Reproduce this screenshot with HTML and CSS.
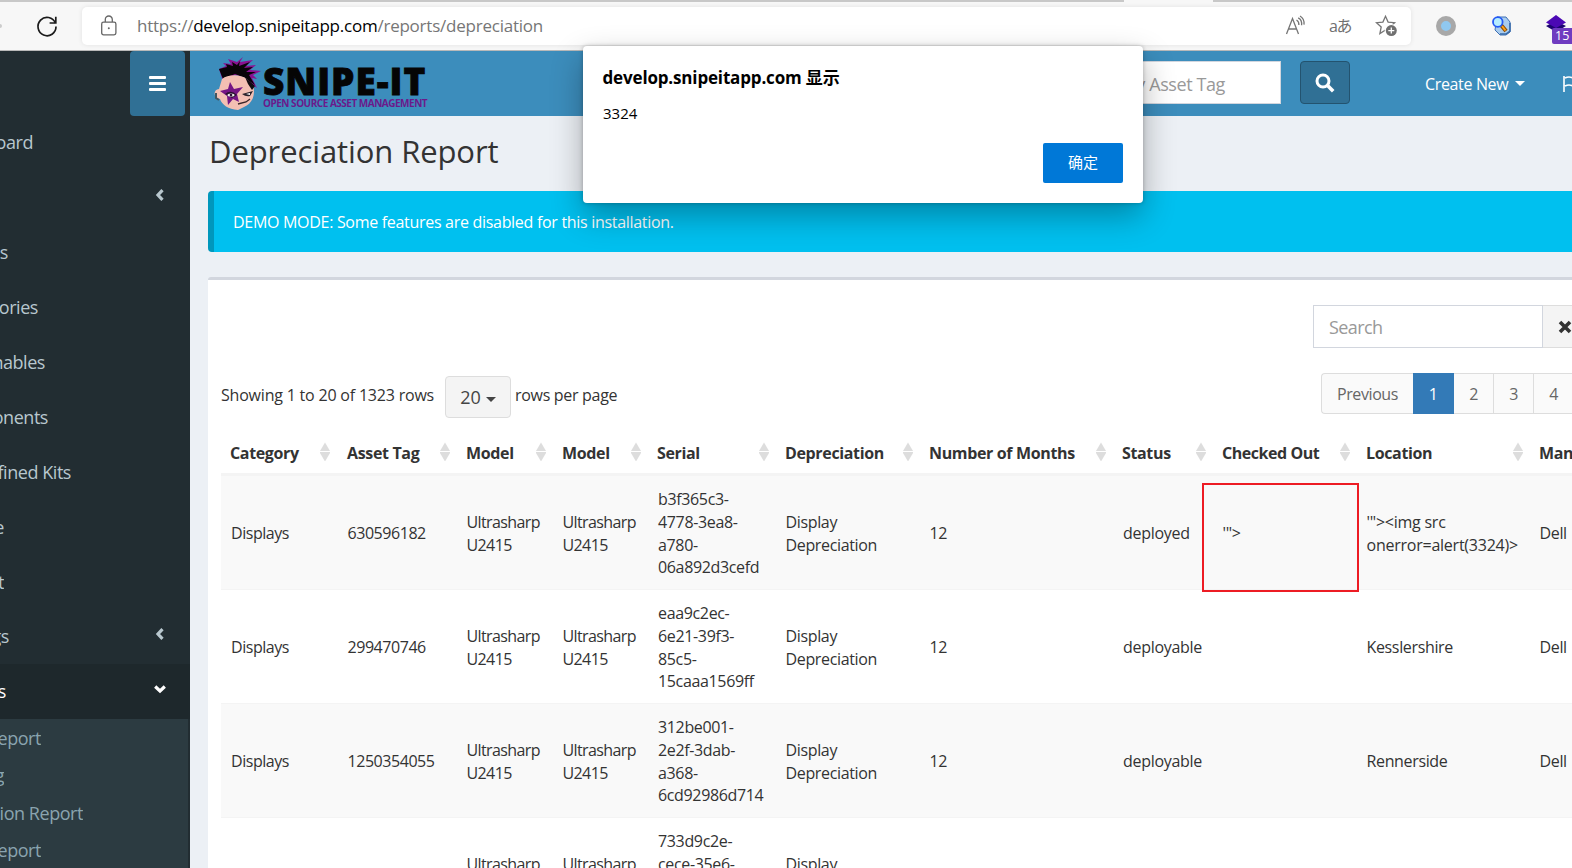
FILE: index.html
```html
<!DOCTYPE html>
<html lang="en">
<head>
<meta charset="utf-8">
<title>Depreciation Report</title>
<link rel="stylesheet" href="styles.css">
</head>
<body>
<div class="tabstrip"><span class="tab-active"></span></div>
<div class="toolbar">
  <i class="fwd"></i>
  <svg class="reload" width="24" height="24" viewBox="0 0 24 24" fill="none" stroke="#1b1b1b" stroke-width="1.7"><path d="M20.3 9A9 9.2 0 1 0 21 12.5"/><path d="M20.8 2.8V9H14.6"/></svg>
  <div class="address">
    <svg class="lock" width="18" height="22" viewBox="0 0 18 22" fill="none" stroke="#666" stroke-width="1.3"><rect x="1.7" y="7.2" width="14.2" height="12.6" rx="1.8"/><path d="M5.3 7V4.5a3.5 3.5 0 0 1 7 0V7"/><circle cx="8.8" cy="13.3" r="1" fill="#666" stroke="none"/></svg>
    <span class="url">https://<b>develop.snipeitapp.com</b>/reports/depreciation</span>
    <svg class="read" width="22" height="22" viewBox="0 0 22 22" fill="none" stroke="#757575" stroke-width="1.3"><path d="M1.5 19 7.5 3.5 13.5 19M3.6 14h7.8"/><path d="M11.5 5q2.6 1.4 2.4 5M13.2 2.8q4 2 3.4 7.4M15 1q4.6 2.600 4 8.600"/></svg>
    <span class="lang">aあ</span>
    <svg class="fav" width="24" height="24" viewBox="0 0 24 24"><path d="M10.500 2.300 13.100 8.100 19.600 8.700 14.800 13 16 19.300 10.500 16 4.900 19.600 6.200 13 1.500 8.700 7.900 8.100Z" fill="none" stroke="#757575" stroke-width="1.3"/><circle cx="16.300" cy="16.600" r="6.600" fill="#fff"/><circle cx="16.300" cy="16.600" r="5.500" fill="#707070"/><path d="M16.300 13.600v6M13.300 16.600h6" stroke="#fff" stroke-width="1.3"/></svg>
  </div>
  <i class="ring"></i>
  <svg class="finder" width="20" height="20" viewBox="0 0 20 20"><path d="M6 1h9l4 5v10l-4 3H9l-5-5z" fill="#a9ccee" stroke="#3d6fb4"/><path d="M9 18h6l4-3V7" fill="none" stroke="#3568a8" stroke-width="1.500"/><path d="m10 9 5 6" stroke="#8a4a00" stroke-width="4"/><path d="m11 10 3.500 4.500" stroke="#ffa31a" stroke-width="2"/><circle cx="6.800" cy="6" r="4.800" fill="#b5ecff" stroke="#2459f5" stroke-width="1.800"/></svg>
  <div class="stack">
    <svg width="24" height="24" viewBox="0 0 24 24"><path d="m2 12 10-5 10 5-10 6z" fill="#1d0670"/><path d="M2 8.500 12 1l10 7.500L12 14z" fill="#4b09b4"/></svg>
    <span class="count">15</span>
  </div>
</div>

<div class="page">
  <aside class="sidebar">
    <div class="toggle-row"><button class="toggle"><i></i><i></i><i></i></button></div>
    <ul class="menu">
      <li><span class="w-dash">oard</span></li>
      <li class="parent"><svg class="chev" width="10" height="14" viewBox="0 0 10 14"><path d="M7.500 2.200 3 7l4.500 4.800"/></svg></li>
      <li><span class="w-lic">es</span></li>
      <li><span class="w-acc">ories</span></li>
      <li><span class="w-con">nables</span></li>
      <li><span class="w-com">onents</span></li>
      <li><span class="w-kit">fined Kits</span></li>
      <li><span class="w-peo">e</span></li>
      <li><span class="w-imp">t</span></li>
      <li class="parent"><span class="w-set">gs</span><svg class="chev" width="10" height="14" viewBox="0 0 10 14"><path d="M7.500 2.200 3 7l4.500 4.800"/></svg></li>
      <li class="parent active"><span class="w-rep">s</span><svg class="chev down" width="14" height="10" viewBox="0 0 14 10"><path d="M2.200 2.500 7 7l4.800-4.500"/></svg></li>
    </ul>
    <ul class="submenu">
      <li><span class="w-sub">eport</span></li>
      <li><span class="w-log">g</span></li>
      <li><span class="w-dep">tion Report</span></li>
      <li><span class="w-sub">eport</span></li>
    </ul>
  </aside>

  <main class="main">
    <header class="navbar">
      <div class="logo">
        <svg width="48" height="54" viewBox="0 0 48 54">
          <path d="M6 12 13 9 10 6 18 7 15 2 24 5 30 0 27 5 40 3 33 9 43 8 37 13 48 14 40 18 44 22 39 21 44 31 36 25 32 20 22 18 10 24Z" fill="#8a1191"/>
          <path d="M6 12 14 10 13 7 20 9 19 5 24 8 27 4 26 9 37 5 31 11 40 10 33 15 43 15 36 18 42 28 32 21 22 17 10 22Z" fill="#080408"/>
          <path d="M9 22C15 17 27 17 34 22L40 28C43 38 39 47 31 50L25 53C15 52 9 48 7 42C0 41 0 32 6 32Z" fill="#f3bfb3"/>
          <path d="M32 20 42 29 39 33 35 27Z" fill="#100b10"/>
          <path d="m17 25 4 7 9-2-6 7 2 8-6-3-5 6-1-9-7-5 8-2z" fill="#751585"/>
          <path d="M12 37q6-5 12 1l-5 3z" fill="#2a1230"/><ellipse cx="18" cy="38" rx="3.500" ry="1.600" fill="#eee"/><circle cx="18" cy="38" r="1.300" fill="#301036"/>
          <path d="m29 37 11-3-3 5q-4 1-8-2" fill="#29212a"/><path d="m33 37 4-1v2z" fill="#fff"/><path d="m25 47 8-2 4-3" stroke="#3c2528" stroke-width="1.300" fill="none"/>
          <path d="M3 36v5l3 2" stroke="#44565f" stroke-width="2" fill="none"/>
        </svg>
        <div class="wordmark"><span class="name">SNIPE-IT</span><span class="tag">OPEN SOURCE ASSET MANAGEMENT</span></div>
      </div>
      <div class="lookup"><span>y Asset Tag</span></div>
      <button class="go"><svg width="20" height="20" viewBox="0 0 20 20" fill="none" stroke="#fff" stroke-width="3"><circle cx="8" cy="8" r="6"/><path d="m12.300 12.300 5.900 5.900" stroke-width="3.600"/></svg></button>
      <a class="create">Create New<i class="caret"></i></a>
      <svg class="flag" width="20" height="18" viewBox="0 0 20 18" fill="none" stroke="#fff" stroke-width="1.600"><path d="M2 1v16M3 3q4-2 8 0t8 0v8q-4 2-8 0t-8 0"/></svg>
    </header>

    <h1 class="title">Depreciation Report</h1>
    <div class="alert">DEMO MODE: Some features are disabled for this installation.</div>

    <section class="box">
      <div class="search-row">
        <div class="search">Search</div>
        <div class="clear"><svg width="14" height="14" viewBox="0 0 14 14" stroke="#333" stroke-width="3.600"><path d="m2 2 10 10M12 2 2 12"/></svg></div>
      </div>
      <div class="pager-row">
        <div class="info"><span class="showing">Showing 1 to 20 of 1323 rows</span><button class="size">20<i class="caret"></i></button><span class="per">rows per page</span></div>
        <div class="pager"><span class="prev">Previous</span><span class="on">1</span><span>2</span><span>3</span><span>4</span></div>
      </div>
      <table class="grid">
        <colgroup><col class="c1"><col class="c2"><col class="c3"><col class="c4"><col class="c5"><col class="c6"><col class="c7"><col class="c8"><col class="c9"><col class="c10"><col class="c11"></colgroup>
        <thead><tr>
          <th><div>Category<i class="sort"></i></div></th><th><div>Asset Tag<i class="sort"></i></div></th><th><div>Model<i class="sort"></i></div></th><th><div>Model<i class="sort"></i></div></th><th><div>Serial<i class="sort"></i></div></th><th><div>Depreciation<i class="sort"></i></div></th><th><div>Number of Months<i class="sort"></i></div></th><th><div>Status<i class="sort"></i></div></th><th><div>Checked Out<i class="sort"></i></div></th><th><div>Location<i class="sort"></i></div></th><th><div>Man</div></th>
        </tr></thead>
        <tbody>
          <tr><td>Displays</td><td>630596182</td><td>Ultrasharp<br>U2415</td><td>Ultrasharp<br>U2415</td><td>b3f365c3-<br>4778-3ea8-<br>a780-<br>06a892d3cefd</td><td>Display<br>Depreciation</td><td>12</td><td>deployed</td><td class="marked">'"&gt;<i class="mark"></i></td><td class="loose">'"&gt;&lt;img src<br>onerror=alert(3324)&gt;</td><td>Dell</td></tr>
          <tr><td>Displays</td><td>299470746</td><td>Ultrasharp<br>U2415</td><td>Ultrasharp<br>U2415</td><td>eaa9c2ec-<br>6e21-39f3-<br>85c5-<br>15caaa1569ff</td><td>Display<br>Depreciation</td><td>12</td><td>deployable</td><td></td><td>Kesslershire</td><td>Dell</td></tr>
          <tr><td>Displays</td><td>1250354055</td><td>Ultrasharp<br>U2415</td><td>Ultrasharp<br>U2415</td><td>312be001-<br>2e2f-3dab-<br>a368-<br>6cd92986d714</td><td>Display<br>Depreciation</td><td>12</td><td>deployable</td><td></td><td>Rennerside</td><td>Dell</td></tr>
          <tr class="last"><td></td><td></td><td>Ultrasharp</td><td>Ultrasharp</td><td>733d9c2e-<br>cece-35e6-</td><td>Display</td><td></td><td></td><td></td><td></td><td></td></tr>
        </tbody>
      </table>
    </section>
  </main>
</div>

<div class="dialog" role="alertdialog">
  <h2>develop.snipeitapp.com 显示</h2>
  <p>3324</p>
  <button>确定</button>
</div>
</body>
</html>
```

FILE: styles.css
```css
* { box-sizing: border-box; }
html, body { margin: 0; width: 1572px; height: 868px; overflow: hidden; }
body {
  position: relative;
  display: flex;
  flex-direction: column;
  background: #ecf0f5;
  color: #333;
  font: 16px/22.86px "Open Sans", "Noto Sans CJK SC", sans-serif;
  white-space: nowrap;
}
ul { list-style: none; margin: 0; padding: 0; }
button { border: 0; padding: 0; font: inherit; color: inherit; }

/* browser chrome */
.tabstrip { flex: none; height: 2px; background: #c8c8c8; padding-left: 1124px; }
.tab-active { display: block; width: 89px; height: 2px; background: #f7f7f7; }
.toolbar { flex: none; height: 49px; display: flex; align-items: center; background: #f7f7f7; border-bottom: 1px solid #b9b9b9; }
.fwd { width: 2px; height: 4px; background: #ccc; border-radius: 0 2px 2px 0; margin-right: 33px; }
.reload { margin-right: 23px; }
.address { width: 1329px; height: 38px; background: #fff; border-radius: 5px; box-shadow: 0 0 5px rgba(0,0,0,.09); display: flex; align-items: center; padding-left: 18px; }
.lock { margin-right: 19px; }
.url { width: 1148px; font-size: 17px; letter-spacing: -.23px; color: #767676; }
.url b { font-weight: 400; color: #000; }
.read { flex: none; margin-right: 22px; }
.lang { flex: none; width: 22px; font: 16px/24px "Open Sans", "Noto Sans CJK JP", sans-serif; letter-spacing: -1.500px; color: #707070; margin-right: 24px; }
.ring { flex: none; width: 20px; height: 20px; border-radius: 50%; background: #90c8f0; border: 5px solid #a8a8a8; margin: 0 36px 0 25px; }
.finder { flex: none; margin: 0 32px 0 -1px; }
.stack { position: relative; flex: none; width: 24px; height: 24px; margin-left: 1px; }
.count { position: absolute; left: 8px; top: 14px; width: 22px; height: 16px; background: #6f3cc0; border-radius: 2px; color: #fff; font-size: 12.500px; line-height: 16px; padding-left: 3px; }

.page { display: flex; height: 817px; }

/* sidebar */
.sidebar { flex: none; width: 190px; background: #222d32; color: #b8c7ce; font-size: 18px; letter-spacing: -.45px; }
.toggle-row { height: 64px; display: flex; padding-left: 130px; }
.toggle { width: 55px; height: 65px; background: #307095; border-radius: 4px; display: flex; flex-direction: column; align-items: center; justify-content: center; gap: 3px; }
.toggle i { width: 17px; height: 3px; background: #fff; border-radius: 1px; }
.menu li { height: 54.9px; display: flex; align-items: center; padding-top: .8px; }
.menu span, .submenu span { display: flex; justify-content: flex-end; overflow: hidden; }
.chev { margin-left: auto; margin-right: 25px; position: relative; top: -3px; fill: none; stroke: #b8c7ce; stroke-width: 3.200; }
.chev.down { margin-right: 23px; stroke: #fff; }
.menu .active { background: #1e282c; color: #fff; }
.submenu { width: 188px; height: 150px; background: #2c3b41; color: #8aa4af; }
.submenu li { height: 37.400px; display: flex; align-items: center; padding-top: 2px; }
.w-dash { width: 33px; } .w-lic { width: 8px; } .w-acc { width: 38px; } .w-con { width: 45px; }
.w-com { width: 48px; } .w-kit { width: 71px; } .w-peo { width: 4px; } .w-imp { width: 4px; }
.w-set { width: 9px; } .w-rep { width: 6px; } .w-sub { width: 41px; } .w-log { width: 4px; } .w-dep { width: 83px; }

/* header */
.main { width: 1382px; overflow: hidden; }
.navbar { height: 65px; background: #3c8dbc; display: flex; align-items: center; padding-left: 23px; }
.logo { flex: none; width: 751px; display: flex; align-items: center; }
.wordmark { display: flex; flex-direction: column; padding-top: 5px; margin-left: 2px; }
.name { font: 800 37px/34px "Open Sans", sans-serif; letter-spacing: 1px; color: #050505; -webkit-text-stroke: .8px #050505; }
.tag { font: 700 10px/10px "Open Sans", sans-serif; letter-spacing: -.49px; color: #6b1a8b; }
.lookup { flex: none; width: 317px; height: 43px; margin-top: -2px; background: #fff; border: 1px solid #d2d6de; font-size: 18px; line-height: 24px; color: #999; display: flex; align-items: center; justify-content: flex-end; padding: 2px 55px 0 0; letter-spacing: -.4px; }
.go { flex: none; width: 50px; height: 43px; margin: -2px 0 0 19px; background: #307095; border: 1px solid #23536f; border-radius: 4px; display: flex; align-items: center; justify-content: center; }
.create { flex: none; color: #fff; margin-left: 75px; width: 101px; display: flex; align-items: center; letter-spacing: -.35px; padding-top: 1px; }
.caret { display: inline-block; border: 5px solid transparent; border-top-color: currentColor; border-bottom: 0; margin-left: 7px; }
.flag { margin-left: 36px; flex: none; }

/* content */
.title { margin: 0; height: 75px; padding: 13px 0 0 19px; font-size: 31px; line-height: 44px; font-weight: 400; letter-spacing: -.1px; }
.alert { height: 61px; margin: 0 0 25px 18px; border-left: 6px solid #0097bc; border-radius: 4px 0 0 4px; background: #00c0ef; color: #fff; padding: 20px 0 0 19px; letter-spacing: -.3px; }
.box { margin-left: 18px; height: 600px; background: #fff; border-top: 3px solid #d2d6de; border-radius: 3px 0 0 0; padding: 25px 0 0 13px; }
.search-row { display: flex; height: 43px; padding-left: 1092px; }
.search { flex: none; width: 230px; border: 1px solid #d2d6de; font-size: 18px; line-height: 43px; padding-left: 15px; color: #999; letter-spacing: -.6px; }
.clear { flex: none; width: 40px; background: #f4f4f4; border: solid #ddd; border-width: 1px 0; display: flex; align-items: center; padding-left: 15px; }
.pager-row { display: flex; justify-content: space-between; height: 83px; padding-top: 25px; }
.info { display: flex; align-items: center; height: 43px; letter-spacing: -.2px; }
.info span { position: relative; top: 1px; }
.showing { width: 224px; }
.per { letter-spacing: -.3px; }
.size { width: 66px; height: 42px; margin: 5px 4px 0 0; background: #f4f4f4; border: 1px solid #ddd; border-radius: 4px; font-size: 18px; color: #444; }
.size .caret { margin-left: 5px; vertical-align: 2px; }
.pager { display: flex; height: 41px; color: #666; width: 251px; letter-spacing: -.4px; }
.pager span { flex: none; width: 40px; background: #fafafa; border: 1px solid #ddd; border-left: 0; line-height: 41px; text-align: center; }
.pager .prev { width: 92px; border-left: 1px solid #ddd; border-radius: 4px 0 0 4px; border-right: 0; }
.pager .on { width: 41px; background: #337ab7; border-color: #337ab7; color: #fff; }

.grid { table-layout: fixed; width: 1391px; border-collapse: separate; border-spacing: 0; letter-spacing: -.35px; }
.c1 { width: 116px; } .c2 { width: 120px; } .c3 { width: 96px; } .c4 { width: 95px; } .c5 { width: 128px; } .c6 { width: 144px; }
.c7 { width: 193px; } .c8 { width: 100px; } .c9 { width: 144px; } .c10 { width: 173px; } .c11 { width: 82px; }
.grid th { height: 45px; padding: 2px 0 0 9px; text-align: left; border-bottom: 3px solid #f4f4f4; }
.grid th:nth-child(2) { padding-left: 10px; }
.grid th:nth-child(9) { letter-spacing: -.45px; }
.grid th div { display: flex; align-items: center; justify-content: space-between; padding-right: 7px; }
.sort { position: relative; top: -1px; width: 10px; height: 19px; background: linear-gradient(#ddd 0 9px, #fff 9px 10px, #ddd 10px); clip-path: polygon(50% 0, 100% 45%, 100% 55%, 50% 100%, 0 55%, 0 45%); }
.grid td { height: 114px; padding: 2px 0 0 9.500px; border-bottom: 1px solid #f4f4f4; vertical-align: middle; }
.grid td:nth-child(1) { letter-spacing: -.45px; padding-left: 10px; }
.grid td:nth-child(2) { padding-left: 10.500px; letter-spacing: -.45px; }
.grid td:nth-child(3), .grid td:nth-child(4) { letter-spacing: -.6px; }
.grid td:nth-child(5), .grid td:nth-child(8) { padding-left: 10px; }
.grid td:nth-child(8) { letter-spacing: -.3px; }
.grid td.loose { letter-spacing: -.24px; }
.grid tbody tr:nth-child(odd) { background: #f9f9f9; }
.grid .last td { vertical-align: top; padding-top: 35px; }
.grid .last td:nth-child(5) { padding-top: 12px; }
.marked { position: relative; }
.mark { position: absolute; left: -11px; top: 7px; width: 157px; height: 109px; border: 2px solid #ed1c24; }

/* alert dialog */
.dialog { position: absolute; left: 583px; top: 46px; width: 560px; height: 157px; background: #fff; border-radius: 4px; box-shadow: 0 13px 32px rgba(0,0,0,.3), 0 0 4px rgba(0,0,0,.25); padding: 19px 20px 20px; display: flex; flex-direction: column; color: #000; }
.dialog h2 { margin: 0 0 0 -.5px; font-size: 17px; line-height: 25px; font-weight: 700; letter-spacing: -.16px; }
.dialog p { margin: 12px 0 0; font-size: 15px; line-height: 23px; }
.dialog button { margin: auto 0 0 auto; width: 80px; height: 40px; flex: none; background: #0078d7; color: #fff; border-radius: 2px; font-size: 15px; line-height: 38px; padding-bottom: 2px; }
```
